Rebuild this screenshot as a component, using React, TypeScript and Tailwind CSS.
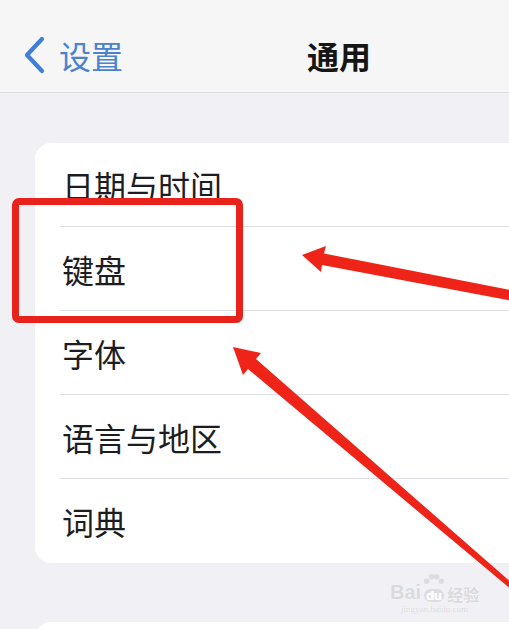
import React from "react"

const rows = ["日期与时间", "键盘", "字体", "语言与地区", "词典"]

const font = { fontFamily: '"Noto Sans CJK SC", "Noto Sans", sans-serif' }

function Arrows() {
  // red annotation arrows drawn over the list
  return (
    <svg className="absolute inset-0 pointer-events-none" width={509} height={629} viewBox="0 0 509 629">
      <polygon
        fill="#ee2419"
        points="302,255 326,246 324,253.5 520,292 518,302 322,265 321,272"
      />
      <polygon
        fill="#ee2419"
        points="233,347 261,353 256,359 522,592 519,596 248,369 243,375"
      />
    </svg>
  )
}

function Watermark() {
  return (
    <div className="absolute left-[390px] top-[582px] flex flex-col items-center text-[#d9d9de]" style={{ textShadow: "0 0 1px #fff" }}>
      <div className="flex items-end leading-none">
        <span className="text-[20px] font-bold" style={{ fontFamily: '"Liberation Sans", sans-serif' }}>Bai</span>
        <span className="relative mx-[1px] flex h-[20px] w-[24px] items-end justify-center">
          <svg className="absolute -top-[9px] left-[1px]" width={22} height={13} viewBox="0 0 24 14">
            <circle cx="4" cy="9" r="3" fill="#dcdce1" />
            <circle cx="9.5" cy="4" r="3" fill="#dcdce1" />
            <circle cx="15" cy="4" r="3" fill="#dcdce1" />
            <circle cx="20" cy="9" r="3" fill="#dcdce1" />
          </svg>
          <span className="rounded-[8px] bg-[#dcdce1] px-[2px] text-[13px] font-bold text-white" style={{ fontFamily: '"Liberation Sans", sans-serif' }}>du</span>
        </span>
        <span className="text-[16px] font-bold" style={font}>经验</span>
      </div>
      <span className="mt-[3px] text-[9px] leading-none" style={{ fontFamily: '"Liberation Serif", serif' }}>jingyan.baidu.com</span>
    </div>
  )
}

export default function App() {
  return (
    <div className="relative w-[509px] h-[629px] overflow-hidden bg-[#f1f1f5]" style={font}>
      <header className="flex h-[93px] items-center border-b border-[#dedee0] bg-[#f6f6f6] pt-[18px]">
        <div className="flex items-center pl-[21px] w-[307px]">
          <svg width={26} height={38} viewBox="0 0 26 38" className="mr-[12px]">
            <path d="M21 3 L6 19 L21 35" fill="none" stroke="#3f7fd6" strokeWidth={4.2} strokeLinecap="round" strokeLinejoin="round" />
          </svg>
          <span className="text-[32px] leading-none text-[#4a82cf]">设置</span>
        </div>
        <span className="text-[32px] leading-none font-bold text-[#161616]">通用</span>
      </header>

      <main className="pl-[35px] pt-[50px]">
        <div className="rounded-l-[16px] bg-white">
          {rows.map((label, i) => (
            <div key={label} className="flex flex-col">
              <div className="flex h-[83px] items-center pl-[27px] text-[32px] text-[#1d1d1f]">{label}</div>
              {i < rows.length - 1 ? <div className="ml-[25px] h-px bg-[#e2e2e6]" /> : <div className="h-px" />}
            </div>
          ))}
        </div>
        <div className="mt-[59px] h-[40px] rounded-tl-[16px] bg-white" />
      </main>

      <div className="absolute left-[12px] top-[198px] h-[125px] w-[231px] rounded-[7px] border-[7px] border-[#e8231c]" />
      <Arrows />
      <Watermark />
    </div>
  )
}
